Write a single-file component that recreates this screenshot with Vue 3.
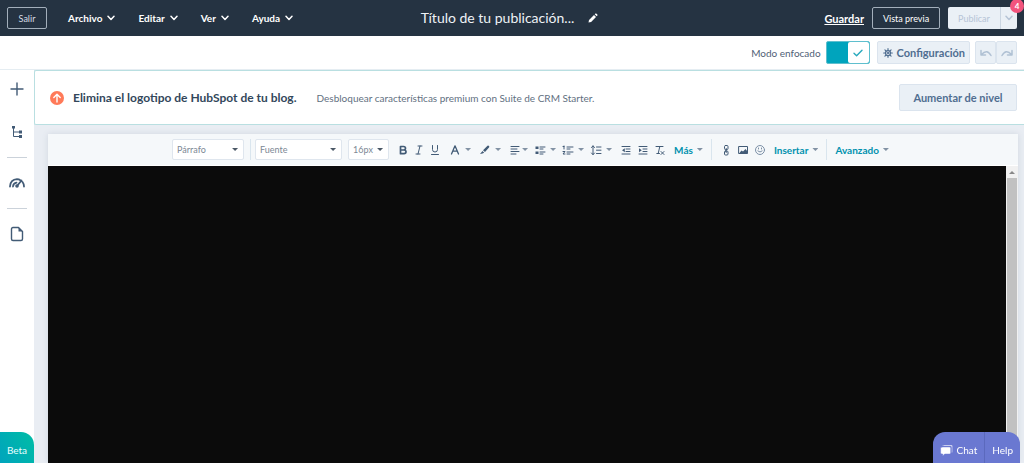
<script setup>
import { ref } from 'vue'

const menus = ['Archivo', 'Editar', 'Ver', 'Ayuda']
const focusMode = ref(true)
</script>

<template>
  <div class="app">
    <header class="topbar">
      <button class="outline exit">Salir</button>
      <nav class="menus">
        <button v-for="m in menus" :key="m" class="menu">
          {{ m }}
          <svg class="chevron" viewBox="0 0 8 6"><path d="M1 1.2 4 4.4 7 1.2" /></svg>
        </button>
      </nav>
      <div class="title">
        <h1>Título de tu publicación...</h1>
        <button class="edit" aria-label="Editar título">
          <svg viewBox="0 0 10 10"><path d="M.5 9.5 1 6.9 6 2 8 4 3.1 9ZM6.7 1.3 7.5.6Q8 .2 8.6.7L9.3 1.4Q9.8 2 9.4 2.5L8.7 3.3Z" /></svg>
        </button>
      </div>
      <div class="actions">
        <a href="#" class="save">Guardar</a>
        <button class="outline preview">Vista previa</button>
        <div class="publish">
          <button class="pub" disabled>Publicar</button>
          <button class="pubmore" disabled aria-label="Más opciones de publicación">
            <svg class="chevron" viewBox="0 0 8 6"><path d="M1 1.2 4 4.4 7 1.2" /></svg>
          </button>
          <span class="badge">4</span>
        </div>
      </div>
    </header>

    <div class="subbar">
      <label class="focus">
        Modo enfocado
        <input v-model="focusMode" type="checkbox" />
        <span class="switch">
          <span class="knob"><svg viewBox="0 0 10 8"><path d="M1 4.2 3.6 6.7 9 1.2" /></svg></span>
        </span>
      </label>
      <button class="soft settings">
        <svg viewBox="0 0 12 12">
          <path class="spokes" d="M6 .8V11.2M.8 6H11.2M2.3 2.3 9.7 9.7M9.7 2.3 2.3 9.7" />
          <circle class="ring" cx="6" cy="6" r="3" />
          <circle class="hub" cx="6" cy="6" r="1" />
        </svg>
        Configuración
      </button>
      <div class="history">
        <button class="soft" aria-label="Deshacer"><svg viewBox="0 0 12 8"><path d="M1 1.5V6H5.5M1.5 5.5Q7-.5 11 6.5" /></svg></button>
        <button class="soft" aria-label="Rehacer"><svg viewBox="0 0 12 8"><path d="M11 1.5V6H6.500M10.500 5.500Q5-.5 1 6.500" /></svg></button>
      </div>
    </div>

    <div class="body">
      <aside class="side">
        <button aria-label="Añadir"><svg viewBox="0 0 16 16"><path d="M8 2V14M2 8H14" /></svg></button>
        <button class="tree" aria-label="Estructura">
          <svg viewBox="0 0 16 16"><path class="line" d="M4.500 3V12.500H11M4.500 8H11" /><path class="fill" d="M3 2H6V4.500H3ZM10 6.500H13V9.500H10ZM10 11H13V14H10Z" /></svg>
        </button>
        <hr />
        <button aria-label="Optimizar">
          <svg viewBox="0 0 16 16"><path class="thick" d="M1 11.500Q1.500 4.500 8 4.200 10 4.200 11 5M13.500 7Q15 9 15 11.500M4 11.500Q4.300 8 7.500 7.600M8 11 12.500 5.500" /><circle class="fill" cx="8" cy="11" r="1.800" /></svg>
        </button>
        <hr />
        <button aria-label="Contenido"><svg viewBox="0 0 16 16"><path d="M4 1.500H9.500L13.500 5.500V13Q13.500 14.500 12 14.500H4Q2.500 14.500 2.500 13V3Q2.500 1.500 4 1.500Z" /><path class="fill" d="M9.500 1.500V5.500H13.500Z" /></svg></button>
        <button class="beta">Beta</button>
      </aside>

      <main class="main">
        <section class="banner">
          <svg class="up" viewBox="0 0 14 14"><circle cx="7" cy="7" r="7" /><path d="M7 11V3.500M3.800 6.500 7 3.300 10.200 6.500" /></svg>
          <strong>Elimina el logotipo de HubSpot de tu blog.</strong>
          <span class="desc">Desbloquear características premium con Suite de CRM Starter.</span>
          <button class="soft upgrade">Aumentar de nivel</button>
        </section>

        <section class="editor">
          <div class="toolbar" role="toolbar" aria-label="Formato">
            <div class="pick para"><select aria-label="Estilo"><option>Párrafo</option></select><i class="caret dark"></i></div>
            <i class="sep first"></i>
            <div class="pick font"><select aria-label="Fuente"><option>Fuente</option></select><i class="caret dark"></i></div>
            <div class="pick size"><select aria-label="Tamaño"><option>16px</option></select><i class="caret dark"></i></div>
            <div class="group">
              <button aria-label="Negrita"><svg viewBox="0 0 12 12"><path class="bold" d="M3.500 2.500H6.500Q8.500 2.500 8.500 4.200T6.500 6H3.500ZM3.500 6H7Q9 6 9 7.800T7 9.700H3.500Z" /></svg></button>
              <button aria-label="Cursiva"><svg viewBox="0 0 12 12"><path d="M5 2H9M3 10H7M7 2 5 10" /></svg></button>
              <button aria-label="Subrayado"><svg viewBox="0 0 12 12"><path d="M3.500 1.500V5.500Q3.500 8 6 8T8.500 5.500V1.500M2.500 10.500H9.500" /></svg></button>
            </div>
            <div class="group loose">
              <button aria-label="Color de texto"><svg viewBox="0 0 12 12"><path class="mid" d="M2.500 10 6 1.800 9.500 10M3.700 7.200H8.300" /></svg><i class="caret"></i></button>
              <button aria-label="Resaltado"><svg viewBox="0 0 12 12"><path class="fill" d="M4 6.200 8.500 1.800Q9.300 1.200 10 2T10 3.500L6 8ZM3.500 7 5.200 8.700 3.500 9.500 1 10Z" /></svg><i class="caret"></i></button>
            </div>
            <div class="group mixed">
              <button class="tight" aria-label="Alineación"><svg viewBox="0 0 12 12"><path d="M2 2.500H10M2 5H8M2 7.500H10M2 10H7" /></svg><i class="caret"></i></button>
              <button aria-label="Viñetas"><svg viewBox="0 0 12 12"><path d="M6 3H11M6 5H9M6 8H11M6 10H9" /><path class="fill" d="M1.500 2.500H4.500V5H1.500ZM1.500 7.500H4.500V10H1.500Z" /></svg><i class="caret"></i></button>
              <button aria-label="Numeración"><svg viewBox="0 0 12 12"><path d="M5 3H11M5 5H8M5 8H11M5 10H8" /><path class="thin" d="M2 2V5M1 2.500H2M1 7.500H3L1 10H3" /></svg><i class="caret"></i></button>
              <button aria-label="Interlineado"><svg viewBox="0 0 12 12"><path d="M3 2V10.500M1.500 3.500 3 1.800 4.500 3.500M1.500 9 3 10.700 4.500 9M6.500 3H11M6.500 6.200H11M6.500 9.500H11" /></svg><i class="caret"></i></button>
            </div>
            <div class="group roomy">
              <button aria-label="Reducir sangría"><svg viewBox="0 0 12 12"><path d="M2 2.500H10M6 5H10M6 7.500H10M2 10H10" /><path class="fill" d="M2 6.200 4.800 4.200V8.200Z" /></svg></button>
              <button aria-label="Aumentar sangría"><svg viewBox="0 0 12 12"><path d="M2 2.500H10M6 5H10M6 7.500H10M2 10H10" /><path class="fill" d="M4.800 6.200 2 4.200V8.200Z" /></svg></button>
              <button aria-label="Borrar formato"><svg viewBox="0 0 12 12"><path d="M2 2.500H9M5.800 2.500 4.200 9.500M2.800 9.500H5.500M7 7.500 10 10.500M10 7.500 7 10.500" /></svg></button>
            </div>
            <button class="word">Más<i class="caret"></i></button>
            <i class="sep"></i>
            <div class="group roomy">
              <button aria-label="Enlace"><svg viewBox="0 0 12 12"><rect x="4.500" y="1.500" width="3.500" height="4" rx="1" /><rect x="4.500" y="7" width="3.500" height="4" rx="1" /><path d="M6.200 4.500V8.500" /></svg></button>
              <button aria-label="Imagen"><svg viewBox="0 0 12 12"><rect x="2" y="2.500" width="8.500" height="7" /><path class="fill" d="M2 9.500 4.500 6.500 6 7.500 8.500 5 10.500 7.500V9.500Z" /></svg></button>
              <button class="pale" aria-label="Emoji"><svg viewBox="0 0 12 12"><circle cx="6" cy="6" r="4.500" /><path d="M3.800 7Q6 9.200 8.200 7M4.500 4V5M7.500 4V5" /></svg></button>
            </div>
            <button class="word">Insertar<i class="caret"></i></button>
            <i class="sep"></i>
            <button class="word">Avanzado<i class="caret"></i></button>
          </div>
          <div class="canvas">
            <div class="page"></div>
            <div class="scroll"><i class="arrow"></i><div class="thumb"></div></div>
          </div>
        </section>
      </main>
    </div>

    <div class="chat">
      <button>
        <svg viewBox="0 0 14 14"><path d="M4 1H12Q13.500 1 13.500 2.500V8Q13.500 9.500 12.500 9.500V3.500Q12.500 2.200 11 2.200H2.500Q2.800 1 4 1Z" /><path d="M2 3.200H10.200Q11.500 3.200 11.500 4.500V9.500Q11.500 10.800 10.200 10.800H5L3 13V10.800H2Q.7 10.800.7 9.500V4.500Q.7 3.200 2 3.200Z" /></svg>
        Chat
      </button>
      <button>Help</button>
    </div>
  </div>
</template>

<style>
html, body { margin: 0; height: 100%; }
#app { height: 100%; }
</style>

<style scoped>
.app {
  height: 100vh;
  display: flex;
  flex-direction: column;
  overflow: hidden;
  background: #fff;
  color: #33475b;
  font-family: Lato, "Liberation Sans", sans-serif;
  font-size: 10px;
}
* { box-sizing: border-box; }
button, select { font: inherit; color: inherit; background: none; border: 0; padding: 0; margin: 0; white-space: nowrap; }
svg { display: block; flex: none; fill: none; stroke: currentColor; stroke-linecap: round; stroke-linejoin: round; }

.topbar {
  flex: none;
  height: 36px;
  padding: 0 7px;
  display: grid;
  grid-template-columns: 1fr auto 1fr;
  grid-template-areas: "left title right";
  align-items: center;
  background: #253342;
  color: #fff;
  position: relative;
}
.outline { height: 22px; border: 1px solid #a3afbb; border-radius: 2px; font-size: 9px; }
.exit { grid-area: left; width: 40px; color: #d5dce4; }
.menus { grid-area: left; display: flex; gap: 23px; padding-left: 61px; }
.menu { display: flex; align-items: center; gap: 5px; font-size: 10px; font-weight: 700; }
.chevron { width: 8px; height: 6px; stroke-width: 1.500; }
.title { grid-area: title; display: flex; align-items: center; gap: 14px; padding-right: 5px; }
h1 { margin: 0; font-size: 14px; line-height: 20px; font-weight: 400; color: #eef2f6; }
.edit svg { width: 10px; height: 10px; fill: #fff; stroke: none; }
.actions { grid-area: right; display: flex; align-items: center; justify-content: flex-end; gap: 8px; }
.save { color: #fff; font-size: 11px; font-weight: 700; text-decoration: underline; text-underline-offset: 1px; }
.preview { width: 68px; }
.publish { display: flex; position: relative; height: 22px; background: #eaf0f6; border-radius: 2px; color: #b6c4d6; font-size: 9px; }
.pub { width: 52px; }
.pubmore { width: 17px; display: grid; place-items: center; border-left: 1px solid #cbd6e2; }
.badge { position: absolute; right: -7px; top: -8px; width: 14px; height: 14px; border-radius: 50%; background: #f2547d; color: #fff; font-size: 8px; line-height: 14px; font-weight: 700; text-align: center; }

.subbar { flex: none; height: 34px; padding: 0 7px; display: flex; align-items: center; justify-content: flex-end; gap: 7px; border-bottom: 1px solid #e5edf2; }
.focus { display: flex; align-items: center; gap: 5px; font-size: 10px; position: relative; color: #506176; }
.focus input { position: absolute; opacity: 0; margin: 0; }
.switch { width: 44px; height: 23px; display: flex; justify-content: flex-end; background: #00a4bd; border-radius: 2px; border: 1px solid #5fbfce; }
.knob { width: 21px; display: grid; place-items: center; background: #fff; color: #27a9bd; border-radius: 2px; }
.knob svg { width: 10px; height: 8px; stroke-width: 1.400; }
.soft { background: #eaf0f6; border: 1px solid #dbe4ee; border-radius: 2px; color: #506e91; }
.settings { height: 23px; padding: 0 4px 0 5px; display: flex; align-items: center; gap: 4px; font-size: 11px; font-weight: 700; }
.settings svg { width: 10px; height: 10px; }
.spokes { stroke-width: 1.400; }
.ring { fill: #eaf0f6; stroke-width: 1.500; }
.hub { fill: #506e91; stroke-width: 1; }
.history { display: flex; margin-left: -2px; }
.history .soft { width: 21px; height: 23px; display: grid; place-items: center; color: #b0c1d4; }
.history svg { width: 12px; height: 8px; stroke-width: 1.500; }

.body { flex: 1; min-height: 0; display: flex; }
.side { flex: none; width: 34px; display: flex; flex-direction: column; align-items: center; padding-top: 11px; color: #425b76; }
.side svg { width: 16px; height: 16px; stroke-width: 1.400; }
.tree { margin: 27px 0 17px; }
.side .line { stroke-width: 1; }
.side hr { width: 20px; height: 1px; margin: 0; border: 0; background: #cbd2da; flex: none; }
.side hr + button { margin: 17px 0; }
.fill { fill: currentColor; stroke: none; }
.thick { stroke-width: 1.800; }
.beta { margin-top: auto; align-self: stretch; height: 31px; border-radius: 0 13px 0 0; background: linear-gradient(60deg, #00a4bd, #00bda5); color: #e8ffff; font-size: 10px; }
.side .beta { margin-bottom: 0; padding-top: 4px; }

.main { flex: 1; min-width: 0; display: flex; flex-direction: column; background: #e9edf3; }
.banner { flex: none; height: 55px; display: flex; align-items: center; padding: 0 7px 0 15px; background: #fff; border: 1px solid #b9dfe1; border-right: 0; border-radius: 2px 0 0 2px; }
.up { width: 14px; height: 14px; margin-right: 9px; stroke: #fff; stroke-width: 1.400; }
.up circle { fill: #ff7a59; stroke: none; }
.banner strong { font-size: 12px; font-weight: 700; color: #33475b; }
.desc { margin-left: 20px; font-size: 10px; color: #62707f; }
.upgrade { margin-left: auto; width: 118px; height: 27px; font-size: 11px; font-weight: 700; }

.editor { flex: 1; min-height: 0; margin: 9px 6px 0 14px; display: flex; flex-direction: column; box-shadow: 0 0 6px #cfd6df; }
.toolbar { flex: none; height: 32px; display: flex; align-items: center; justify-content: center; gap: 8px; padding-right: 5px; background: #f5f8fa; border-bottom: 1px solid #fff; color: #425b76; }
.pick { position: relative; height: 21px; display: flex; align-items: center; background: #fff; border: 1px solid #dfe6ee; border-radius: 2px; }
.pick select { appearance: none; width: 100%; height: 100%; padding-left: 4px; font-size: 9px; color: #7c8895; }
.pick .caret { position: absolute; right: 5px; pointer-events: none; }
.para { width: 72px; }
.font { width: 87px; }
.size { width: 41px; margin-left: -2px; }
.sep { width: 1px; height: 21px; background: #d9e5ee; }
.sep.first { margin: 0 -4px 0 -2px; }
.caret { flex: none; width: 6px; height: 3px; background: #8292a4; clip-path: polygon(0 0, 100% 0, 50% 100%); }
.caret.dark { background: #4b5866; }
.group { display: flex; gap: 4px; }
.group.loose { gap: 8px; }
.group.mixed { gap: 6px; }
.group.roomy { gap: 5px; }
.group button { display: flex; align-items: center; gap: 4px; }
.group .tight { gap: 1px; }
.group svg { width: 12px; height: 12px; stroke-width: 1; }
.bold { stroke-width: 1.700; }
.mid { stroke-width: 1.300; }
.thin { stroke-width: 1; }
.pale { color: #7c90a7; }
.word { display: flex; align-items: center; gap: 4px; color: #0091ae; font-size: 10px; font-weight: 700; }
.canvas { flex: 1; min-height: 0; display: flex; }
.page { flex: 1; background: #0b0b0b; }
.scroll { width: 12px; display: flex; flex-direction: column; align-items: center; background: #f1f1f1; }
.arrow { width: 6px; height: 3px; margin: 5px 0 4px; background: #888; clip-path: polygon(50% 0, 100% 100%, 0 100%); }
.thumb { flex: 1; width: 10px; background: #c1c1c1; }

.chat { position: fixed; right: 4px; bottom: 0; height: 31px; display: flex; background: #6a78d1; border-radius: 12px 12px 0 0; color: #fff; font-size: 10px; overflow: hidden; }
.chat button { display: flex; align-items: center; gap: 4px; padding: 5px 7px 0; }
.chat button + button { border-left: 1px solid #5b69bd; }
.chat svg { width: 13px; height: 13px; fill: #fff; stroke: #6a78d1; stroke-width: .5; }
</style>
